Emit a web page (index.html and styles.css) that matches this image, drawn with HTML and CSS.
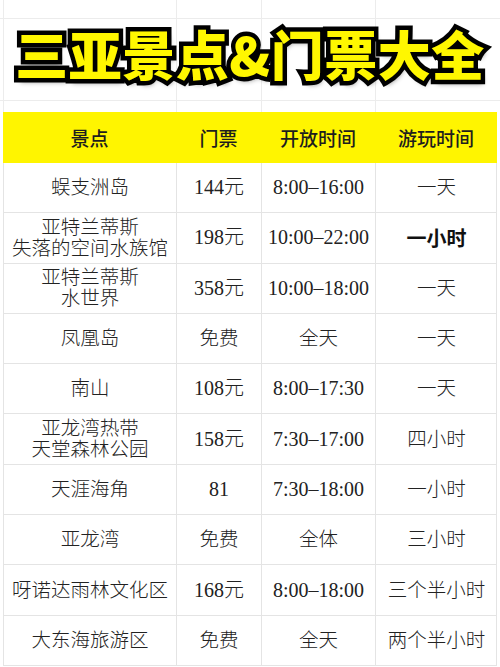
FILE: index.html
```html
<!DOCTYPE html>
<html lang="zh-CN">
<head>
<meta charset="utf-8">
<title>三亚景点&amp;门票大全</title>
<link rel="stylesheet" href="styles.css">
</head>
<body>
<div class="page">
  <div class="title-area">
    <h1 class="title">三亚景点&amp;门票大全</h1>
  </div>
  <div class="table">
    <div class="row head">
      <div class="c">景点</div>
      <div class="c">门票</div>
      <div class="c">开放时间</div>
      <div class="c">游玩时间</div>
    </div>
    <div class="row">
      <div class="c">蜈支洲岛</div>
      <div class="c num">144元</div>
      <div class="c num">8:00–16:00</div>
      <div class="c">一天</div>
    </div>
    <div class="row">
      <div class="c two">亚特兰蒂斯<br>失落的空间水族馆</div>
      <div class="c num">198元</div>
      <div class="c num">10:00–22:00</div>
      <div class="c strong">一小时</div>
    </div>
    <div class="row">
      <div class="c two">亚特兰蒂斯<br>水世界</div>
      <div class="c num">358元</div>
      <div class="c num">10:00–18:00</div>
      <div class="c">一天</div>
    </div>
    <div class="row">
      <div class="c">凤凰岛</div>
      <div class="c">免费</div>
      <div class="c">全天</div>
      <div class="c">一天</div>
    </div>
    <div class="row">
      <div class="c">南山</div>
      <div class="c num">108元</div>
      <div class="c num">8:00–17:30</div>
      <div class="c">一天</div>
    </div>
    <div class="row">
      <div class="c two">亚龙湾热带<br>天堂森林公园</div>
      <div class="c num">158元</div>
      <div class="c num">7:30–17:00</div>
      <div class="c">四小时</div>
    </div>
    <div class="row">
      <div class="c">天涯海角</div>
      <div class="c num">81</div>
      <div class="c num">7:30–18:00</div>
      <div class="c">一小时</div>
    </div>
    <div class="row">
      <div class="c">亚龙湾</div>
      <div class="c">免费</div>
      <div class="c">全体</div>
      <div class="c">三小时</div>
    </div>
    <div class="row">
      <div class="c">呀诺达雨林文化区</div>
      <div class="c num">168元</div>
      <div class="c num">8:00–18:00</div>
      <div class="c">三个半小时</div>
    </div>
    <div class="row">
      <div class="c">大东海旅游区</div>
      <div class="c">免费</div>
      <div class="c">全天</div>
      <div class="c">两个半小时</div>
    </div>
  </div>
</div>
</body>
</html>
```

FILE: styles.css
```css
* { box-sizing: border-box; }

html, body {
  margin: 0;
  padding: 0;
  background: #ffffff;
}

.page {
  width: 500px;
  height: 667px;
  overflow: hidden;
  font-family: "Liberation Serif", "Noto Sans CJK SC", serif;
  color: #222222;
}

.title-area {
  height: 112px;
  display: flex;
  align-items: center;
  justify-content: center;
  padding-bottom: 6px;
  background-image:
    linear-gradient(#ececec, #ececec),
    linear-gradient(#ececec, #ececec),
    linear-gradient(#ececec, #ececec),
    linear-gradient(#ececec, #ececec),
    linear-gradient(#ececec, #ececec),
    linear-gradient(#ececec, #ececec);
  background-repeat: no-repeat;
  background-size: 1px 100%, 1px 100%, 1px 100%, 1px 100%, 100% 1px, 100% 1px;
  background-position: 3px 0, 176px 0, 261px 0, 375px 0, 0 18px, 0 100px;
}

.title {
  margin: 0;
  font-family: "Noto Sans CJK SC", sans-serif;
  font-weight: 900;
  font-size: 53px;
  line-height: 1;
  letter-spacing: 0.5px;
  color: #fff700;
  -webkit-text-stroke: 9px #000000;
  paint-order: stroke fill;
  text-shadow: 2px 4px 5px rgba(0, 0, 0, 0.45);
  white-space: nowrap;
}

.table {
  margin-left: 3px;
  width: 494px;
}

.row {
  display: grid;
  grid-template-columns: 173px 85px 114px 122px;
  height: 50.3px;
  border-bottom: 1px solid #e4e4e4;
  border-right: 1px solid #e4e4e4;
}

.row.head {
  height: 51px;
  background: #fff500;
  border: none;
}

.c {
  display: flex;
  align-items: center;
  justify-content: center;
  text-align: center;
  border-left: 1px solid #e4e4e4;
  font-size: 19.5px;
  font-weight: 300;
  line-height: 21px;
  white-space: nowrap;
}

.head .c {
  border-left: none;
  font-family: "Noto Sans CJK SC", sans-serif;
  font-weight: 500;
  font-size: 19px;
  color: #1e1e1e;
}

.c.num {
  font-size: 20px;
}

.c.two {
  line-height: 21px;
}

.c.strong {
  font-family: "Noto Sans CJK SC", sans-serif;
  font-weight: 700;
  font-size: 20px;
  color: #111111;
}
```
